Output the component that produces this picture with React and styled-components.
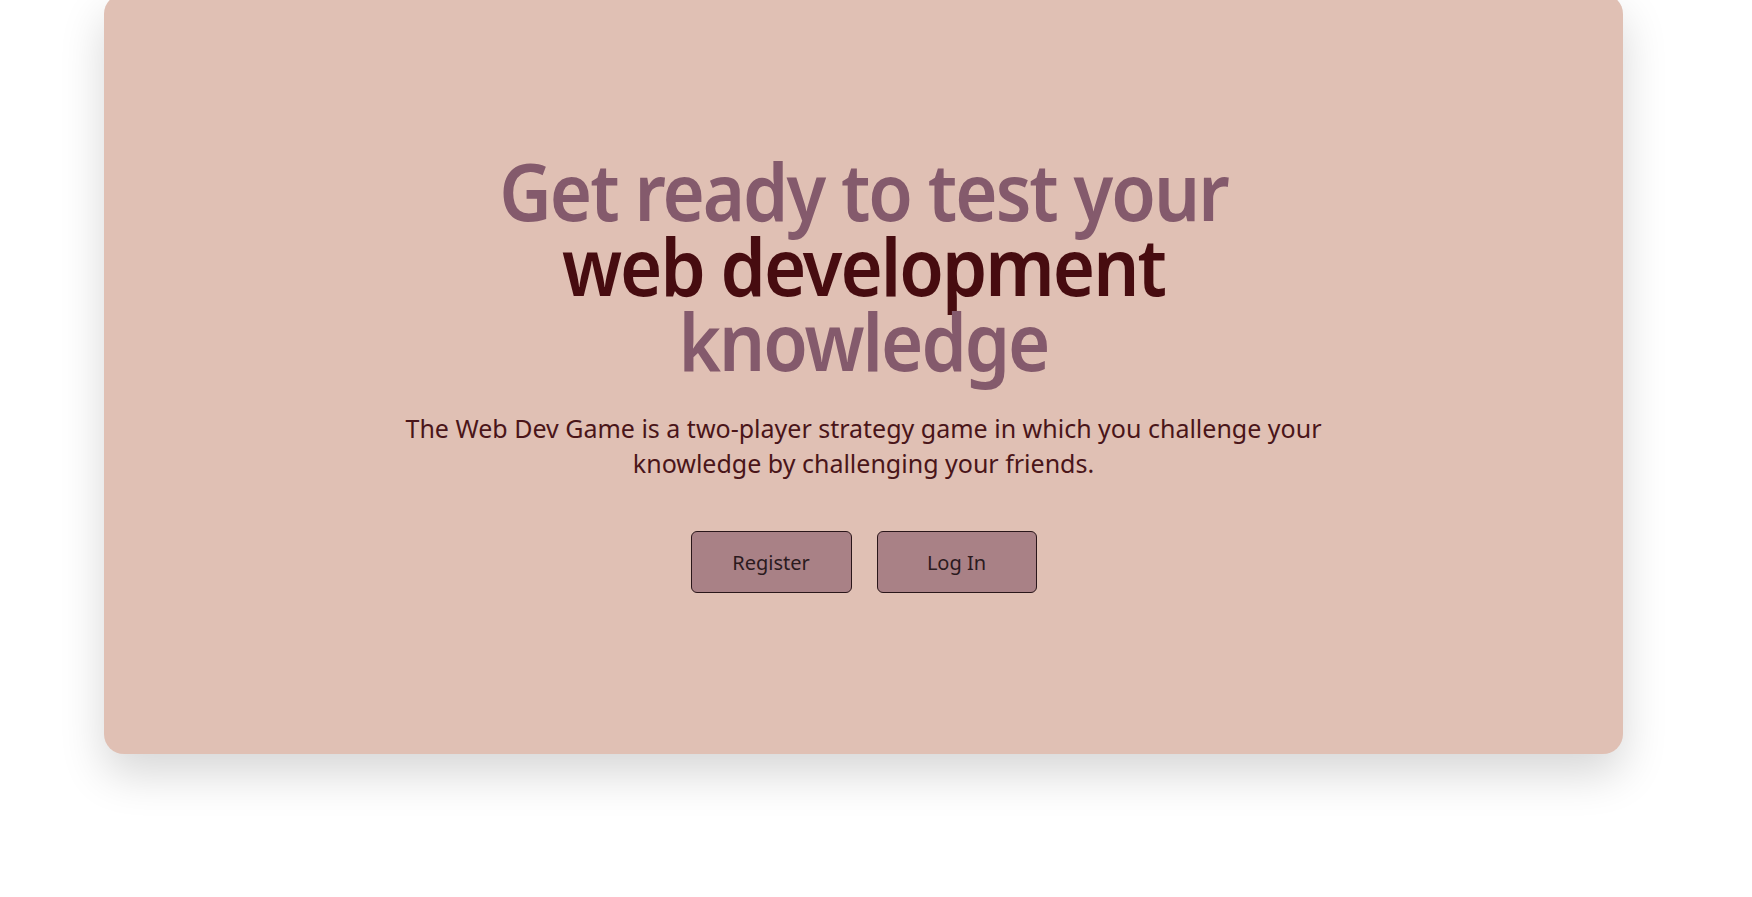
import React from "react";
import styled, { createGlobalStyle } from "styled-components";

const Global = createGlobalStyle`
  html, body { margin: 0; padding: 0; background: #ffffff; }
  body { font-family: "Noto Sans", "Open Sans", sans-serif; }
`;

const Page = styled.div`
  width: 1752px;
  height: 897px;
  overflow: hidden;
  background: #ffffff;
`;

const Card = styled.section`
  box-sizing: border-box;
  width: 1519px;
  height: 760px;
  margin: -6px 0 0 104px;
  padding-top: 158px;
  background: #e0c0b4;
  border-radius: 20px;
  box-shadow: 0 20px 45px rgba(0, 0, 0, 0.16);
  display: flex;
  flex-direction: column;
  align-items: center;
  justify-content: flex-start;
  text-align: center;
`;

const Heading = styled.h1`
  margin: 0;
  font-family: "Noto Sans", sans-serif;
  font-weight: 600;
  font-size: 80px;
  line-height: 75px;
  letter-spacing: -2.2px;
  color: #845a6c;
  transform: scaleX(0.905);
  transform-origin: 50% 50%;
`;

const Accent = styled.span`
  display: block;
  color: #470c10;
`;

const Lead = styled.p`
  margin: 34px 0 0;
  width: 1000px;
  font-family: "Noto Sans", sans-serif;
  font-size: 25px;
  line-height: 35px;
  color: #4a1519;
`;

const Actions = styled.div`
  display: flex;
  gap: 25px;
  margin-top: 50px;
`;

const Button = styled.button`
  box-sizing: border-box;
  width: ${(p) => p.$w}px;
  height: 62px;
  background: #a98186;
  border: 1px solid #2a161a;
  border-radius: 6px;
  font-family: "Noto Sans", sans-serif;
  font-size: 20px;
  color: #2b1a1e;
  cursor: pointer;
`;

export default function App() {
  return (
    <Page>
      <Global />
      <Card>
        <Heading>
          Get ready to test your
          <Accent>web development</Accent>
          knowledge
        </Heading>
        <Lead>
          The Web Dev Game is a two-player strategy game in which you challenge
          your knowledge by challenging your friends.
        </Lead>
        <Actions>
          <Button $w={161}>Register</Button>
          <Button $w={160}>Log In</Button>
        </Actions>
      </Card>
    </Page>
  );
}
